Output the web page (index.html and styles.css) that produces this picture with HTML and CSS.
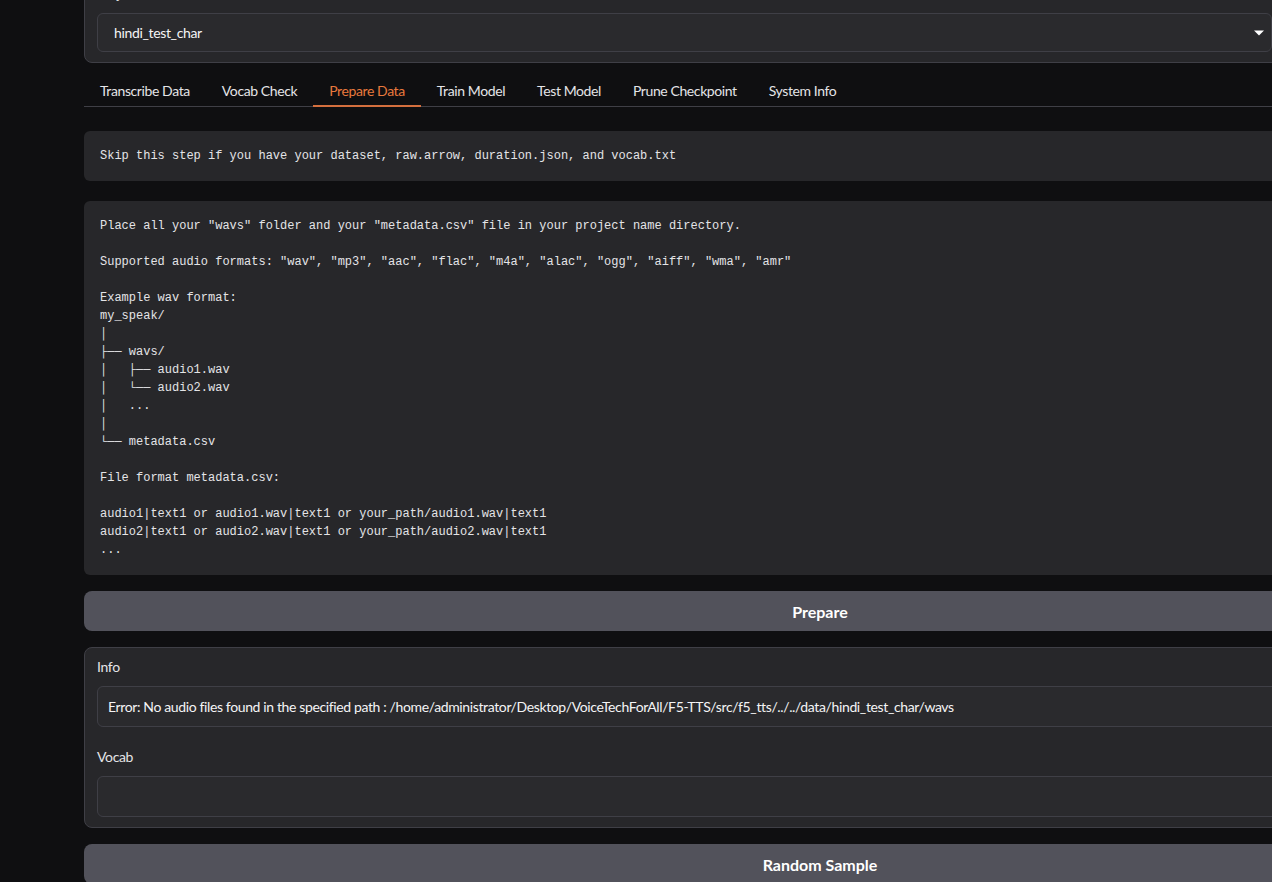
FILE: index.html
```html
<!DOCTYPE html>
<html lang="en">
<head>
    <meta charset="UTF-8">
    <meta name="viewport" content="width=device-width, initial-scale=1.0">
    <title>F5-TTS Finetune</title>
    <link rel="stylesheet" href="styles.css">
</head>
<body>
    <div class="page">
        <div class="top-row">
            <div class="block dropdown-block">
                <label class="block-label">Project Name</label>
                <div class="select">
                    <span>hindi_test_char</span>
                    <svg class="select-arrow" width="10" height="6" viewBox="0 0 10 6">
                        <path d="M0 0.5 H10 L5 5.5 Z" fill="#ffffff"/>
                    </svg>
                </div>
            </div>
        </div>

        <div class="tabs">
            <div class="tab-nav">
                <button class="tab">Transcribe Data</button>
                <button class="tab">Vocab Check</button>
                <button class="tab selected">Prepare Data</button>
                <button class="tab">Train Model</button>
                <button class="tab">Test Model</button>
                <button class="tab">Prune Checkpoint</button>
                <button class="tab">System Info</button>
            </div>

            <div class="tab-panel">
                <div class="code-block"><pre>Skip this step if you have your dataset, raw.arrow, duration.json, and vocab.txt</pre></div>

                <div class="code-block"><pre>Place all your "wavs" folder and your "metadata.csv" file in your project name directory.

Supported audio formats: "wav", "mp3", "aac", "flac", "m4a", "alac", "ogg", "aiff", "wma", "amr"

Example wav format:
my_speak/
│
├── wavs/
│   ├── audio1.wav
│   └── audio2.wav
│   ...
│
└── metadata.csv

File format metadata.csv:

audio1|text1 or audio1.wav|text1 or your_path/audio1.wav|text1
audio2|text1 or audio2.wav|text1 or your_path/audio2.wav|text1
...</pre></div>

                <button class="btn">Prepare</button>

                <div class="block form-block">
                    <label class="block-label">Info</label>
                    <div class="textbox">Error: No audio files found in the specified path : /home/administrator/Desktop/VoiceTechForAll/F5-TTS/src/f5_tts/../../data/hindi_test_char/wavs</div>
                    <label class="block-label second">Vocab</label>
                    <div class="textbox"></div>
                </div>

                <button class="btn">Random Sample</button>
            </div>
        </div>
    </div>
</body>
</html>
```

FILE: styles.css
```css
body {
    margin: 0;
    background-color: #0f0f11;
    color: #f4f4f5;
    font-family: Lato, "Open Sans", sans-serif;
    font-size: 14px;
    overflow: hidden;
}

.page {
    width: 1472px;
    margin-left: 84px;
    margin-top: -26px;
}

.block {
    background-color: #27272a;
    border: 1px solid #3f3f46;
    border-radius: 8px;
    padding: 9px 12px 10px;
}

.block-label {
    display: block;
    line-height: 20px;
    margin-bottom: 9px;
    color: #e4e4e7;
    letter-spacing: -0.35px;
}

.dropdown-block {
    width: 1175px;
}

.select {
    display: flex;
    align-items: center;
    justify-content: space-between;
    height: 37px;
    padding: 0 7px 0 16px;
    border: 1px solid #3f3f46;
    border-radius: 6px;
    background-color: #2a2a2d;
    color: #f4f4f5;
    letter-spacing: -0.35px;
}

.select-arrow {
    display: block;
}

.tabs {
    margin-top: 15px;
}

.tab-nav {
    display: flex;
    border-bottom: 1px solid #3f3f46;
}

.tab {
    background: none;
    border: none;
    border-bottom: 2px solid transparent;
    margin-bottom: -1px;
    padding: 3px 16px 4px;
    font-family: inherit;
    font-size: 14px;
    line-height: 20px;
    letter-spacing: -0.4px;
    color: #e4e4e7;
    cursor: pointer;
}

.tab.selected {
    color: #e8793d;
    border-bottom-color: #d46f3e;
}

.tab-panel {
    display: flex;
    flex-direction: column;
    gap: 16px;
    padding-top: 24px;
}

.code-block {
    background-color: #27272a;
    border-radius: 6px;
    padding: 16px;
}

.code-block + .code-block {
    margin-top: 4px;
}

.code-block pre {
    margin: 0;
    font-family: "Liberation Mono", "DejaVu Sans Mono", monospace;
    font-size: 12px;
    line-height: 18px;
    color: #e4e4e7;
}

.btn {
    height: 40px;
    border: none;
    border-radius: 8px;
    background-color: #52525b;
    color: #ffffff;
    font-family: inherit;
    font-size: 16px;
    font-weight: 700;
    cursor: pointer;
}

.textbox {
    min-height: 21px;
    padding: 9px 10px;
    border: 1px solid #3f3f46;
    border-radius: 6px;
    background-color: #2a2a2d;
    line-height: 21px;
    letter-spacing: -0.37px;
    color: #f4f4f5;
    white-space: nowrap;
}

.block-label.second {
    margin-top: 20px;
}
```
